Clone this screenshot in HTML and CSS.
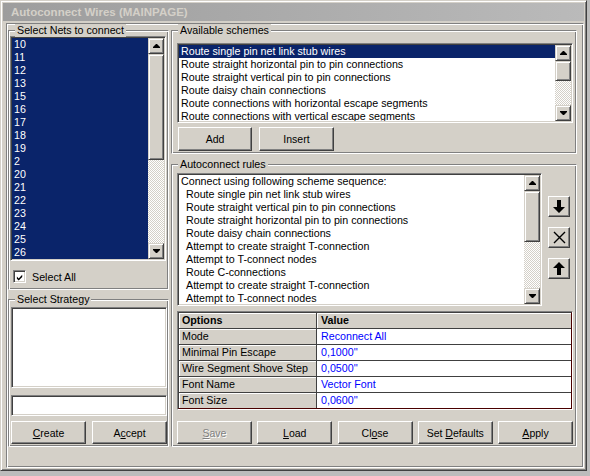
FILE: index.html
```html
<!DOCTYPE html>
<html lang="en">
<head>
  <meta charset="UTF-8">
  <title>Autoconnect Wires</title>
  <link rel="stylesheet" href="styles.css">
</head>
<body>
  <div class="window">
    <div class="titlebar">Autoconnect Wires (MAINPAGE)</div>

    <div class="client">
      <!-- Left column -->
      <div class="col col-left">
        <div class="group group-nets">
          <span class="legend">Select Nets to connect</span>
          <div class="listbox nets">
            <ul class="items">
              <li>10</li><li>11</li><li>12</li><li>13</li><li>15</li><li>16</li>
              <li>17</li><li>18</li><li>19</li><li>2</li><li>20</li><li>21</li>
              <li>22</li><li>23</li><li>24</li><li>25</li><li>26</li>
            </ul>
            <div class="vscroll">
              <div class="sb-btn"><svg width="7" height="4" viewBox="0 0 7 4"><path d="M3 0h1l3 3v1H0V3z"/></svg></div>
              <div class="sb-thumb" style="height: 106px"></div>
              <div class="sb-track"></div>
              <div class="sb-btn"><svg width="7" height="4" viewBox="0 0 7 4"><path d="M0 0h7v1L4 4H3L0 1z"/></svg></div>
            </div>
          </div>
          <label class="check">
            <span class="checkbox"><svg width="9" height="9" viewBox="0 0 9 9"><path d="M1 3.5L3 5.5 7 1.5V4L3 8 1 6z"/></svg></span>
            Select All
          </label>
        </div>

        <div class="group group-strategy">
          <span class="legend">Select Strategy</span>
          <div class="field strategy-list"></div>
          <div class="field strategy-edit"></div>
          <div class="btn-row">
            <button class="btn btn-left"><u>C</u>reate</button>
            <button class="btn btn-left">A<u>c</u>cept</button>
          </div>
        </div>
      </div>

      <!-- Right column -->
      <div class="col col-right">
        <div class="group group-schemes">
          <span class="legend">Available schemes</span>
          <div class="listbox schemes">
            <ul class="items">
              <li class="sel">Route single pin net link stub wires</li>
              <li>Route straight horizontal pin to pin connections</li>
              <li>Route straight vertical pin to pin connections</li>
              <li>Route daisy chain connections</li>
              <li>Route connections with horizontal escape segments</li>
              <li>Route connections with vertical escape segments</li>
            </ul>
            <div class="vscroll">
              <div class="sb-btn"><svg width="7" height="4" viewBox="0 0 7 4"><path d="M3 0h1l3 3v1H0V3z"/></svg></div>
              <div class="sb-thumb" style="height: 20px"></div>
              <div class="sb-track"></div>
              <div class="sb-btn"><svg width="7" height="4" viewBox="0 0 7 4"><path d="M0 0h7v1L4 4H3L0 1z"/></svg></div>
            </div>
          </div>
          <div class="btn-row scheme-buttons">
            <button class="btn btn-add">Add</button>
            <button class="btn btn-insert">Insert</button>
          </div>
        </div>

        <div class="group group-rules">
          <span class="legend">Autoconnect rules</span>
          <div class="rules-row">
            <div class="listbox rules">
              <ul class="items">
                <li>Connect using following scheme sequence:</li>
                <li class="sub">Route single pin net link stub wires</li>
                <li class="sub">Route straight vertical pin to pin connections</li>
                <li class="sub">Route straight horizontal pin to pin connections</li>
                <li class="sub">Route daisy chain connections</li>
                <li class="sub">Attempt to create straight T-connection</li>
                <li class="sub">Attempt to T-connect nodes</li>
                <li class="sub">Route C-connections</li>
                <li class="sub">Attempt to create straight T-connection</li>
                <li class="sub">Attempt to T-connect nodes</li>
              </ul>
              <div class="vscroll">
                <div class="sb-btn"><svg width="7" height="4" viewBox="0 0 7 4"><path d="M3 0h1l3 3v1H0V3z"/></svg></div>
                <div class="sb-thumb" style="height: 51px"></div>
                <div class="sb-track"></div>
                <div class="sb-btn"><svg width="7" height="4" viewBox="0 0 7 4"><path d="M0 0h7v1L4 4H3L0 1z"/></svg></div>
              </div>
            </div>
            <div class="side-tools">
              <button class="btn tool"><svg width="12" height="13" viewBox="0 0 12 13"><path d="M4 0h4v7h4l-6 6-6-6h4z"/></svg></button>
              <button class="btn tool"><svg width="13" height="13" viewBox="0 0 13 13"><path d="M1 1l11 11M12 1L1 12" stroke="#000" stroke-width="1.4" fill="none"/></svg></button>
              <button class="btn tool"><svg width="12" height="13" viewBox="0 0 12 13"><path d="M6 0l6 6H8v7H4V6H0z"/></svg></button>
            </div>
          </div>

          <div class="grid-frame">
            <table class="grid">
              <tr><th class="name">Options</th><th>Value</th></tr>
              <tr><td class="name">Mode</td><td class="val">Reconnect All</td></tr>
              <tr><td class="name">Minimal Pin Escape</td><td class="val">0,1000''</td></tr>
              <tr><td class="name">Wire Segment Shove Step</td><td class="val">0,0500''</td></tr>
              <tr><td class="name">Font Name</td><td class="val">Vector Font</td></tr>
              <tr><td class="name">Font Size</td><td class="val">0,0600''</td></tr>
            </table>
          </div>

          <div class="btn-row bottom-buttons">
            <button class="btn wide disabled"><u>S</u>ave</button>
            <button class="btn wide"><u>L</u>oad</button>
            <button class="btn wide">Cl<u>o</u>se</button>
            <button class="btn wide">Set <u>D</u>efaults</button>
            <button class="btn wide"><u>A</u>pply</button>
          </div>
        </div>
      </div>
    </div>
  </div>
</body>
</html>
```
FILE: styles.css
```css
/* General */
* {
  box-sizing: border-box;
}

body {
  margin: 0;
  background: #bcbcbc;
  font-family: "Liberation Sans", Arial, sans-serif;
  font-size: 10.7px;
  color: #000;
}

/* Window frame */
.window {
  width: 587px;
  height: 471px;
  padding: 2px;
  background: #d4d0c8;
  border: 1px solid;
  border-color: #d4d0c8 #404040 #404040 #d4d0c8;
  box-shadow: inset 1px 1px #fff, inset -1px -1px #808080;
}

.titlebar {
  height: 18px;
  line-height: 18px;
  padding-left: 8px;
  background: linear-gradient(to right, #9d9d9d, #bababa);
  color: #d4d0c8;
  font-weight: bold;
  font-size: 11.5px;
}

.client {
  display: flex;
  gap: 2px;
  width: 578px;
  height: 445px;
  margin: 2px 0 0 3px;
  padding: 6px 0 0 1px;
  border: 1px solid;
  border-color: #808080 #fff #fff #808080;
  box-shadow: inset 1px 1px #fff, inset -1px -1px #808080;
}

.col {
  display: flex;
  flex-direction: column;
}

.col-left {
  width: 161px;
  gap: 9px;
}

.col-right {
  width: 406px;
  gap: 10px;
}

/* Group boxes */
.group {
  position: relative;
  border: 1px solid;
  border-color: #808080 #fff #fff #808080;
  box-shadow: inset 1px 1px #fff, inset -1px -1px #808080;
}

.legend {
  position: absolute;
  top: -7px;
  left: 6px;
  padding: 0 2px;
  line-height: 13px;
  background: #d4d0c8;
  white-space: nowrap;
}

.group-nets {
  height: 260px;
  padding: 5px 0 0 1px;
}

.group-strategy {
  height: 148px;
  padding: 7px 0 0 2px;
}

.group-schemes {
  height: 124px;
  padding: 12px 0 0 5px;
}

.group-rules {
  height: 283px;
  padding: 8px 0 0 5px;
}

/* Sunken fields and lists */
.listbox,
.field {
  background: #fff;
  border: 1px solid;
  border-color: #808080 #fff #fff #808080;
  box-shadow: inset 1px 1px #404040, inset -1px -1px #d4d0c8;
  padding: 1px;
}

.listbox {
  display: flex;
}

.items {
  flex: 1;
  margin: 0;
  padding: 0;
  list-style: none;
  overflow: hidden;
}

.items li {
  height: 13px;
  line-height: 13px;
  padding-left: 2px;
  white-space: nowrap;
}

.items li.sel {
  background: #0a246a;
  color: #fff;
}

.items li.sub {
  padding-left: 7px;
}

.nets {
  width: 156px;
  height: 225px;
}

.nets .items {
  background: #0a246a;
  color: #fff;
}

.schemes {
  width: 396px;
  height: 80px;
}

.rules {
  width: 365px;
  height: 133px;
}

.strategy-list {
  width: 156px;
  height: 81px;
}

.strategy-edit {
  width: 156px;
  height: 21px;
  margin-top: 7px;
}

/* Scrollbars */
.vscroll {
  display: flex;
  flex-direction: column;
  width: 16px;
  flex: none;
}

.sb-btn,
.sb-thumb {
  flex: none;
  background: #d4d0c8;
  border: 1px solid;
  border-color: #d4d0c8 #404040 #404040 #d4d0c8;
  box-shadow: inset 1px 1px #fff, inset -1px -1px #808080;
}

.sb-btn {
  height: 16px;
  display: flex;
  align-items: center;
  justify-content: center;
}

.sb-track {
  flex: 1;
  background-color: #d4d0c8;
  background-image: conic-gradient(#fff 25%, transparent 0 50%, #fff 0 75%, transparent 0);
  background-size: 2px 2px;
}

/* Checkbox */
.check {
  display: flex;
  align-items: center;
  gap: 6px;
  margin: 9px 0 0 3px;
  height: 13px;
}

.checkbox {
  width: 13px;
  height: 13px;
  padding: 1px;
  background: #fff;
  border: 1px solid;
  border-color: #808080 #fff #fff #808080;
  box-shadow: inset 1px 1px #404040, inset -1px -1px #d4d0c8;
  display: flex;
}

.checkbox svg {
  margin: 1px 0 0 1px;
}

/* Buttons */
.btn-row {
  display: flex;
}

.btn {
  height: 23px;
  padding: 0;
  font-family: inherit;
  font-size: 10.5px;
  color: #000;
  background: #d4d0c8;
  border: 1px solid;
  border-color: #fff #404040 #404040 #fff;
  box-shadow: inset -1px -1px #808080;
}

.group-strategy .btn-row {
  gap: 6px;
  margin-top: 5px;
}

.btn-left {
  width: 75px;
}

.scheme-buttons {
  gap: 7px;
  margin: 4px 0 0 1px;
}

.scheme-buttons .btn {
  height: 24px;
}

.btn-add {
  width: 74px;
}

.btn-insert {
  width: 75px;
}

.bottom-buttons {
  width: 396px;
  justify-content: space-between;
  margin-top: 11px;
}

.wide {
  width: 75px;
}

.disabled {
  color: #808080;
  text-shadow: 1px 1px #fff;
}

/* Rules list with side tools */
.rules-row {
  display: flex;
}

.side-tools {
  display: flex;
  flex-direction: column;
  gap: 10px;
  margin: 23px 0 0 6px;
}

.tool {
  width: 22px;
  height: 21px;
  display: flex;
  align-items: center;
  justify-content: center;
}

/* Options grid */
.grid-frame {
  width: 396px;
  height: 99px;
  margin-top: 5px;
  border: 1px solid;
  border-color: #808080 #fff #fff #808080;
}

.grid {
  width: 100%;
  border-collapse: separate;
  border-spacing: 0;
  border: 1px solid;
  border-color: #404040 #4a0000 #4a0000 #404040;
}

.grid th,
.grid td {
  height: 16px;
  padding: 0 0 0 3px;
  line-height: 15px;
  text-align: left;
  white-space: nowrap;
  border-bottom: 1px solid #404040;
}

.grid tr:last-child td {
  height: 15px;
  border-bottom: 0;
}

.grid th {
  background: #d4d0c8;
  font-weight: bold;
  box-shadow: inset 1px 1px #fff;
}

.grid .name {
  width: 138px;
  background: #d4d0c8;
  border-right: 1px solid #404040;
  box-shadow: inset 1px 1px #fff;
}

.grid .val {
  padding-left: 4px;
  background: #fff;
  color: #0000ff;
}

.grid th + th {
  padding-left: 4px;
}
```
